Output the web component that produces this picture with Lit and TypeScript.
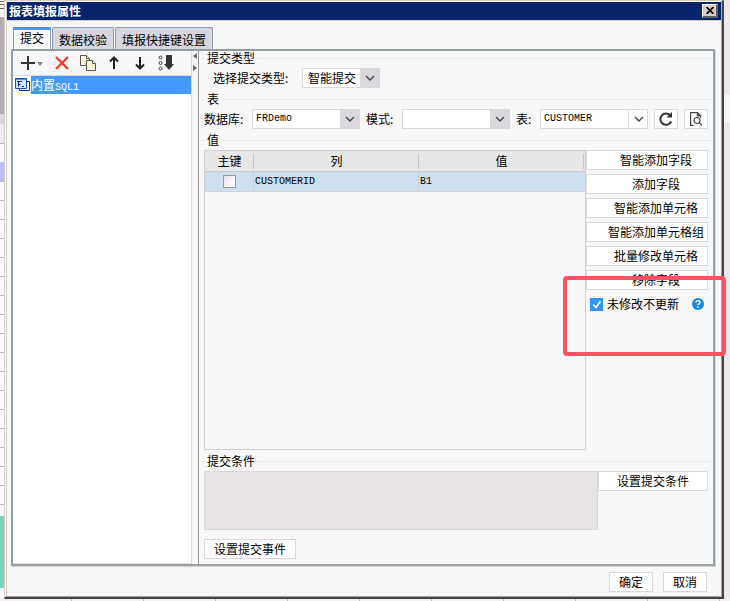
import { LitElement, html, css, svg } from "lit";
import { customElement, property, state } from "lit/decorators.js";
import { classMap } from "lit/directives/class-map.js";

const controls = css`
  * { box-sizing: border-box; }
  button, select, input { font: inherit; color: inherit; margin: 0; }
  button { padding: 0; cursor: default; }
  .latin { font-family: "Liberation Mono", "Noto Sans CJK SC", monospace; font-size: 10px; }
`;

@customElement("combo-box")
class ComboBox extends LitElement {
  @property() label = "";
  @property() value = "";
  @property({ type: Boolean }) latin = false;
  @property({ type: Boolean }) light = false;
  static styles = [controls, css`
    :host { display: block; min-width: 0; }
    .box { display: grid; grid-template-columns: 1fr 20px; height: 20px; }
    select {
      grid-area: 1 / 1 / 2 / 3; appearance: none; width: 100%; height: 20px; padding: 0 20px 0 5px;
      border: 1px solid #dad8dc; border-radius: 0; background: #fff; color: #000; outline: none;
    }
    select.latin { padding-left: 3px; font-size: 10px; }
    .arrow {
      grid-area: 1 / 2; z-index: 1; pointer-events: none; background: #dad8dc;
      display: flex; align-items: center; justify-content: center;
    }
    .arrow.light { background: none; border-left: 1px solid #dad8dc; }
  `];
  render() {
    return html`<div class="box">
      <select class=${classMap({ latin: this.latin })} aria-label=${this.label}><option>${this.value}</option></select>
      <span class=${classMap({ arrow: true, light: this.light })}>
        <svg width="10" height="6" viewBox="0 0 10 6"><path d="M1 1l4 4 4-4" fill="none" stroke="#444" stroke-width="1.4"/></svg>
      </span></div>`;
  }
}

const icons = {
  add: svg`<svg width="24" height="16" viewBox="0 0 24 16"><path d="M8 1v14M1 8h14" stroke="#333" stroke-width="2"/><path d="M17 7h6l-3 4z" fill="#888"/></svg>`,
  remove: svg`<svg width="16" height="16" viewBox="0 0 16 16"><path d="M2 2l12 12M14 2L2 14" stroke="#ee3b30" stroke-width="2.4"/></svg>`,
  copy: svg`<svg width="16" height="16" viewBox="0 0 16 16" fill="#fcf3d6" stroke="#555"><path d="M.5.5h6l3 3v7h-9z"/><path d="M6.500.5v3h3" fill="#fff"/><path d="M6.500 5.500h6l3 3v7h-9z"/><path d="M12.500 5.500v3h3" fill="#fff"/></svg>`,
  up: svg`<svg width="16" height="16" viewBox="0 0 16 16"><path d="M8 2v12M4 6.500l4-4 4 4" fill="none" stroke="#222" stroke-width="2"/></svg>`,
  down: svg`<svg width="16" height="16" viewBox="0 0 16 16"><path d="M8 2v12M4 9.500l4 4 4-4" fill="none" stroke="#222" stroke-width="2"/></svg>`,
  sort: svg`<svg width="16" height="16" viewBox="0 0 16 16"><g fill="none" stroke="#444"><circle cx="2.500" cy="2.500" r="1.500"/><circle cx="2.500" cy="8" r="1.500"/><circle cx="2.500" cy="13.500" r="1.500"/></g><path d="M8 0h6v9h2l-5 6L6 9h2z" fill="#333"/></svg>`,
  dataset: svg`<svg width="16" height="14" viewBox="0 0 16 14"><path d="M4.500 3.500h10v9h-10z" fill="#fff" stroke="#0c2f8c"/><path d="M.5.5h11v10H.5z" fill="#cfe4fc" stroke="#1c4fb4"/><path d="M1 1h10v1H1z" fill="#5c93e6"/><path d="M2 3.500h5M3.500 3.500v5M3.500 6.500h2M7 8.500h2" stroke="#0c2f8c" fill="none"/></svg>`,
  refresh: svg`<svg width="14" height="14" viewBox="0 0 14 14"><path d="M12.300 9.500A5.700 5.700 0 1 1 11.500 3.500" fill="none" stroke="#333" stroke-width="2"/><path d="M13 0v5.500H7.500z" fill="#333"/></svg>`,
  preview: svg`<svg width="14" height="14" viewBox="0 0 14 14" fill="none" stroke="#444" stroke-width="1.2"><path d="M4.500 13.400H1.600V.6h6.800l3.200 3.200v2M8.400.6v3.200h3.200"/><circle cx="8" cy="8.500" r="3"/><path d="M10.200 10.700l2.800 2.700"/></svg>`,
  help: svg`<svg width="12" height="12" viewBox="0 0 12 12"><circle cx="6" cy="6" r="6" fill="#0f8ae9"/><path d="M4 4.600C4 2 8 2 8 4.400 8 5.800 6 5.800 6 7.300M6 8.400v1.500" fill="none" stroke="#fff" stroke-width="1.500"/></svg>`,
  close: svg`<svg width="8" height="7" viewBox="0 0 8 7"><path d="M.5 0l7 7M7.500 0l-7 7" stroke="#000" stroke-width="1.700"/></svg>`,
};

@customElement("app-root")
class AppRoot extends LitElement {
  @state() private tabs = ["提交", "数据校验", "填报快捷键设置"];
  @state() private fieldActions = ["智能添加字段", "添加字段", "智能添加单元格", "智能添加单元格组", "批量修改单元格", "移除字段"];
  static styles = [controls, css`
    :host {
      display: grid; grid-template: 1fr 2px / 4px 1fr 6px; min-height: 100vh; overflow: hidden;
      font: 12px/14px "Noto Sans CJK SC", sans-serif; color: #000; background: #eee9ed;
    }
    .sheet { display: flex; flex-direction: column; background: #fff; }
    .sheet-top { height: 17px; background: linear-gradient(#fff 1px, #666 1px 2px, #fff 2px 4px, #666 4px 5px, #fff 5px 8px, #666 8px 9px, #fff 9px); }
    .sheet-tools { height: 97px; background: #b3adb1; }
    .sheet-bar { height: 10px; background: #dcd8dc; }
    .sheet-head { height: 20px; background: #f0ebef; border-bottom: 1px solid #bdb8bc; }
    .sheet-rows { height: 372px; background: linear-gradient(#bac0ff, #bac0ff) 0 18px / 4px 19px no-repeat, repeating-linear-gradient(#fff 0 18px, #bdb8bc 18px 19px); }
    .sheet-fill { height: 72px; background: #76d1bd; }
    .side { display: flex; flex-direction: column; }
    .side-light { margin-top: 95px; height: 28px; background: #f8f7f8; }
    .below { grid-column: 1 / 4; background: repeating-linear-gradient(90deg, #f3eff2 0 71px, #bbb 71px 72px); }

    .window {
      display: flex; flex-direction: column; min-width: 0; background: #f7f7f7;
      border: solid; border-width: 1px 2px 2px 1px; border-color: #d4d0c8 #464246 #464246 #d4d0c8;
      box-shadow: inset -1px -1px #aaa6a4, inset 1px 0 #fff, inset 2px 0 #d4d0c8;
    }
    .titlebar {
      display: flex; align-items: center; justify-content: space-between; height: 19px; margin: 1px 1px 0 2px;
      padding: 0 3px 0 2px; background: #08246b; color: #fff; border-bottom: 1px solid #d4d0c8;
    }
    h1 { margin: 0; font-size: 12px; line-height: 16px; font-weight: 700; }
    .close {
      display: flex; align-items: center; justify-content: center; width: 16px; height: 14px; background: #d4d0c8;
      border: solid; border-width: 1px 2px 2px 1px; border-color: #fff #606060 #606060 #fff;
    }
    .tabs { display: flex; gap: 1px; padding: 6px 8px 0; height: 28px; }
    .tab {
      height: 22px; padding: 2px 6px 0; border: 1px solid #8a9cae; border-bottom: 0; border-radius: 2px 2px 0 0;
      background: #d7d6de; line-height: 16px; white-space: nowrap;
    }
    .tab.on { background: #f7f7f7; border-top: 3px solid #3f96ff; padding: 0 6px 4px; border-radius: 0; }
    .panel {
      flex: 1; display: flex; margin: 0 7px 0 6px; min-width: 0;
      border: 2px solid; border-color: #939c9f #8fa3b3 #a09f98 #8fa0ab; box-shadow: 1px 1px #ccd5dc;
    }
    .left { flex: 0 0 179px; display: flex; flex-direction: column; border-right: 1px solid #dad8dc; border-bottom: 1px solid #dad8dc; }
    .toolbar { display: flex; align-items: center; gap: 10px; height: 25px; padding-left: 7px; border-bottom: 1px solid #dad8dc; }
    .tool { display: flex; border: 0; background: none; }
    .list { flex: 1; margin: 0; padding: 0; list-style: none; background: #fff; }
    .list li { display: flex; align-items: center; padding-left: 2px; }
    .name { flex: 1; height: 18px; line-height: 18px; background: #4499ff; color: #fff; }
    .splitter { flex: 0 0 7px; display: flex; flex-direction: column; align-items: flex-end; gap: 6px; padding: 2px 1px 0 0; border-right: 1px solid #9a989a; }
    .splitter svg { display: block; flex: none; }
    .right { flex: 1; min-width: 0; display: flex; flex-direction: column; }
    .group { display: flex; flex-direction: column; gap: 3px; padding: 0 5px; margin-bottom: 4px; }
    .grow { flex: 1; }
    .legend { display: flex; align-items: center; gap: 3px; margin: 0 -3px; height: 14px; }
    .legend::before, .legend::after { content: ""; height: 1px; width: 3px; background: #e8e6e8; }
    .legend::after { flex: 1; }
    .type { display: flex; align-items: center; padding-left: 9px; height: 20px; }
    .type-label { width: 89px; }
    .type combo-box { width: 78px; }
    .source { display: grid; grid-template-columns: 48px 1fr 36px 1fr 24px 1fr auto; align-items: center; height: 20px; }
    .source combo-box { margin-right: 6px; }
    .squares { display: flex; gap: 6px; }
    .square { display: flex; align-items: center; justify-content: center; width: 24px; height: 20px; border: 1px solid #dad8dc; background: #fff; }

    .values { flex: 1; display: flex; }
    .fields { flex: 1; min-width: 0; border: 1px solid #d2d0d2; }
    table { width: 100%; border-collapse: separate; border-spacing: 0; table-layout: fixed; }
    .key { width: 49px; }
    .end { width: 1px; }
    th { height: 21px; padding: 0; font-weight: 400; background: linear-gradient(#c8c5bb, #c8c5bb) right center / 1px 15px no-repeat #e7e7e7; border-bottom: 1px solid #c9c9c9; }
    th.end { background: #e7e7e7; }
    td { height: 20px; padding: 0 0 0 1px; background: #cddeee; border-bottom: 1px solid #d2d0d2; border-right: 1px solid #d2d0d2; }
    td.last { border-right: 0; }
    .check { appearance: none; display: block; width: 13px; height: 13px; border: 1px solid #999; background: linear-gradient(135deg, #eae5ea, #fff); }
    td .check { margin: 0 auto; }
    .actions { flex: 0 0 122px; display: flex; flex-direction: column; gap: 4px; }
    .button { height: 20px; padding: 0; border: 1px solid #dad8dc; background: #fff; line-height: 18px; white-space: nowrap; }
    .actions .button { padding-left: 18px; }
    .update { position: relative; display: flex; align-items: center; height: 20px; padding: 0 4px; }
    .update label { flex: 1; display: flex; align-items: center; gap: 4px; }
    .check:checked { border-color: #2f8ff0; background: #3296fa; }
    .tick { display: grid; }
    .tick > * { grid-area: 1 / 1; }
    .tick svg { pointer-events: none; }
    .help { display: flex; border: 0; background: none; }
    .callout { position: absolute; inset: -18px -18px -42px -23px; border: 4px solid #ff5363; border-radius: 4px; pointer-events: none; }
    .condition { display: flex; align-items: flex-start; }
    .condition textarea { flex: 1; min-width: 0; height: 59px; margin: 0; border: 1px solid #dad8dc; border-radius: 0; background: #e8e3e7; resize: none; }
    .condition .button { width: 110px; }
    .event { padding: 5px 5px; }
    .event .button { width: 92px; }
    .footer { display: flex; justify-content: flex-end; gap: 10px; padding: 6px 15px 5px; }
    .footer .button { width: 44px; }
  `];
  render() {
    return html`
      <div class="sheet"><div class="sheet-top"></div><div class="sheet-tools"></div><div class="sheet-bar"></div>
        <div class="sheet-head"></div><div class="sheet-rows"></div><div class="sheet-fill"></div></div>
      <main class="window">
        <header class="titlebar"><h1>报表填报属性</h1><button class="close" aria-label="关闭">${icons.close}</button></header>
        <div class="tabs" role="tablist">
          ${this.tabs.map((t, i) => html`<button role="tab" aria-selected=${i === 0} class=${classMap({ tab: true, on: i === 0 })}>${t}</button>`)}
        </div>
        <div class="panel">
          <section class="left">
            <div class="toolbar">
              ${(["add", "remove", "copy", "up", "down", "sort"] as const).map((n) => html`<button class="tool" aria-label=${n}>${icons[n]}</button>`)}
            </div>
            <ul class="list"><li>${icons.dataset}<span class="name">内置<span class="latin">SQL1</span></span></li></ul>
          </section>
          <div class="splitter">
            <svg width="4" height="6" viewBox="0 0 4 6"><path d="M4 0v6L0 3z" fill="#666"/></svg>
            <svg width="4" height="6" viewBox="0 0 4 6"><path d="M0 0v6l4-3z" fill="#666"/></svg>
          </div>
          <div class="right">
            <section class="group">
              <div class="legend">提交类型</div>
              <div class="type"><span class="type-label">选择提交类型:</span><combo-box label="选择提交类型" value="智能提交"></combo-box></div>
            </section>
            <section class="group">
              <div class="legend">表</div>
              <div class="source">
                <span>数据库:</span><combo-box label="数据库" value="FRDemo" latin></combo-box>
                <span>模式:</span><combo-box label="模式" latin></combo-box>
                <span>表:</span><combo-box label="表" value="CUSTOMER" latin light></combo-box>
                <div class="squares"><button class="square" aria-label="刷新">${icons.refresh}</button><button class="square" aria-label="预览">${icons.preview}</button></div>
              </div>
            </section>
            <section class="group grow">
              <div class="legend">值</div>
              <div class="values">
                <div class="fields"><table>
                  <thead><tr><th class="key">主键</th><th>列</th><th>值</th><th class="end"></th></tr></thead>
                  <tbody><tr><td><input class="check" type="checkbox" aria-label="主键"></td><td class="latin">CUSTOMERID</td><td class="latin last" colspan="2">B1</td></tr></tbody>
                </table></div>
                <div class="actions">
                  ${this.fieldActions.map((a) => html`<button class="button">${a}</button>`)}
                  <div class="update">
                    <label><span class="tick"><input class="check" type="checkbox" checked>
                      <svg width="13" height="13" viewBox="0 0 13 13"><path d="M3 6.500l3 3L10.500 3" fill="none" stroke="#fff" stroke-width="1.500"/></svg></span>未修改不更新</label>
                    <button class="help" aria-label="帮助">${icons.help}</button>
                    <div class="callout"></div>
                  </div>
                </div>
              </div>
            </section>
            <section class="group">
              <div class="legend">提交条件</div>
              <div class="condition"><textarea aria-label="提交条件" readonly></textarea><button class="button">设置提交条件</button></div>
            </section>
            <div class="event"><button class="button">设置提交事件</button></div>
          </div>
        </div>
        <footer class="footer"><button class="button">确定</button><button class="button">取消</button></footer>
      </main>
      <div class="side"><div class="side-light"></div></div>
      <div class="below"></div>`;
  }
}
